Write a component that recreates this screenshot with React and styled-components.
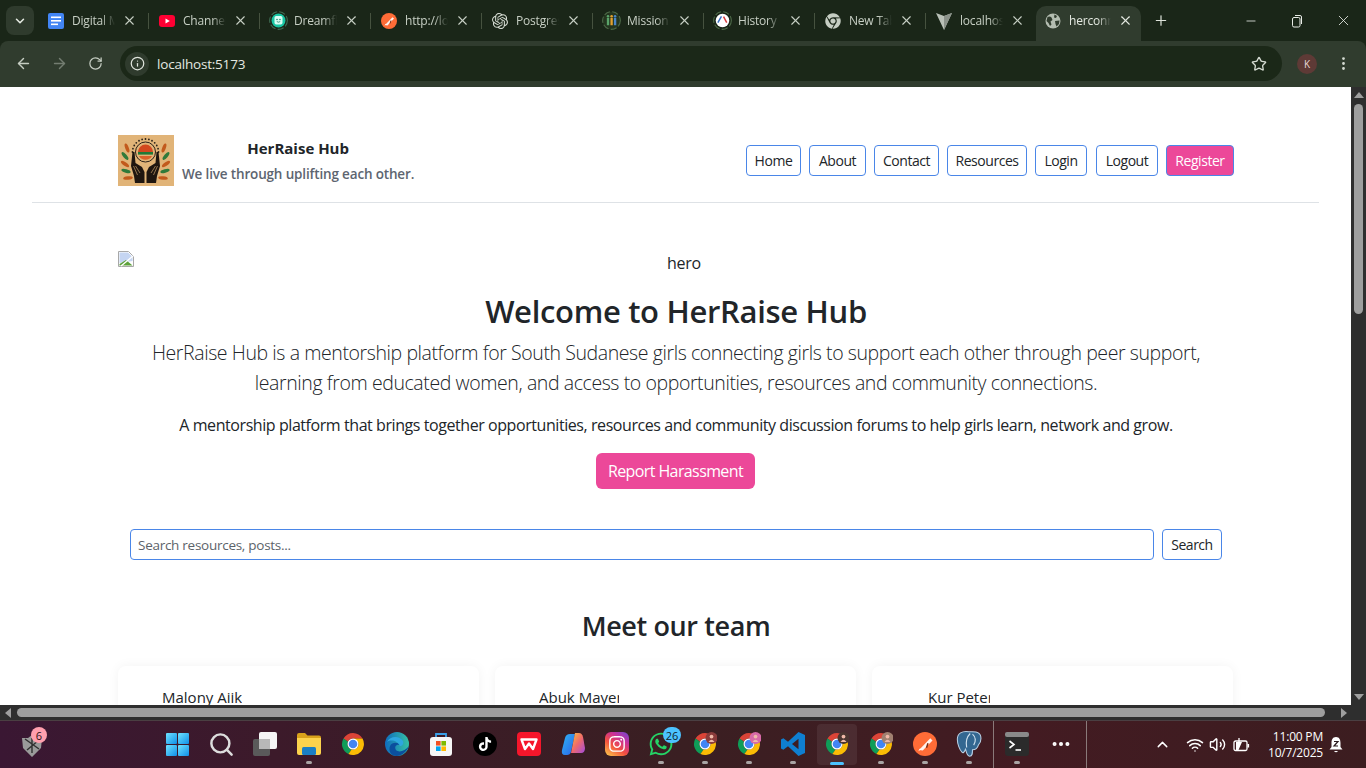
import styled, { createGlobalStyle } from 'styled-components';
import {
    ArrowLeft, ArrowRight, RotateCw, Info, Star, X, Plus, Minus, ChevronDown, ChevronUp,
    EllipsisVertical, Ellipsis, Search, Wifi, Volume2,
} from 'lucide-react';
import { SiOpenai, SiTiktok } from 'react-icons/si';
import { FaWhatsapp, FaInstagram, FaChrome } from 'react-icons/fa';

const GlobalStyle = createGlobalStyle`
html, body {
    margin: 0;
    padding: 0;
    overflow: hidden;
    background: #1a2618;
}
* {
    box-sizing: border-box;
}
`;

const UI_FONT = `"Open Sans", "Noto Sans", sans-serif`;

/* ---------- small drawn icons ---------- */

const DocsIcon = () => (
    <svg width="16" height="16" viewBox="0 0 16 16">
        <rect x="0" y="0" width="16" height="16" rx="2" fill="#4285f4" />
        <rect x="3" y="3.5" width="10" height="1.6" fill="#fff" />
        <rect x="3" y="7" width="10" height="1.6" fill="#fff" />
        <rect x="3" y="10.5" width="7" height="1.6" fill="#fff" />
    </svg>
);

const YoutubeIcon = () => (
    <svg width="16" height="16" viewBox="0 0 16 16">
        <rect x="0" y="2" width="16" height="12" rx="3" fill="#ff0033" />
        <path d="M6.5 5.5 L10.8 8 L6.5 10.5 Z" fill="#fff" />
    </svg>
);

const DreamIcon = () => (
    <svg width="19" height="19" viewBox="0 0 18 18">
        <circle cx="9" cy="9" r="8.4" fill="none" stroke="#3f6b52" strokeWidth="1" strokeDasharray="6 2" />
        <circle cx="9" cy="9" r="6.6" fill="#18c6a3" />
        <rect x="5.2" y="4.8" width="7.6" height="8" rx="1.6" fill="#d8fff4" />
        <circle cx="7.6" cy="8" r=".7" fill="#0f7a64" />
        <circle cx="10.4" cy="8" r=".7" fill="#0f7a64" />
        <path d="M7.4 10 Q9 11.2 10.6 10" stroke="#0f7a64" strokeWidth=".7" fill="none" />
    </svg>
);

const PostmanIcon = ({ size = 16 }) => (
    <svg width={size} height={size} viewBox="0 0 16 16">
        <circle cx="8" cy="8" r="8" fill="#ff6c37" />
        <path d="M4 12 L11.5 4.2 L13 5.6 L6.5 12.4 Z" fill="#fff" opacity=".92" />
        <path d="M3.5 12.8 L5.4 11.6 L4.7 10.8 Z" fill="#fff" />
        <path d="M10 7.5 L9 10.5" stroke="#7a2a10" strokeWidth="1" />
    </svg>
);

const MissionIcon = () => (
    <svg width="19" height="19" viewBox="0 0 18 18">
        <circle cx="9" cy="9" r="8.4" fill="#24351f" stroke="#4d6a48" strokeWidth="1" strokeDasharray="6 2" />
        <rect x="4.6" y="6.5" width="2.2" height="7" fill="#5aa46a" />
        <circle cx="5.7" cy="5" r="1.2" fill="#5aa46a" />
        <rect x="8" y="6.5" width="2.2" height="7" fill="#e0a030" />
        <circle cx="9.1" cy="5" r="1.2" fill="#e0a030" />
        <rect x="11.3" y="6.5" width="2.2" height="7" fill="#4a86c8" />
        <circle cx="12.4" cy="5" r="1.2" fill="#4a86c8" />
    </svg>
);

const HistoryIcon = () => (
    <svg width="19" height="19" viewBox="0 0 18 18">
        <circle cx="9" cy="9" r="8.4" fill="none" stroke="#4d6a48" strokeWidth="1" strokeDasharray="6 2" />
        <circle cx="9" cy="9" r="6.4" fill="#fff" />
        <path d="M4.6 11 L8 5.2" stroke="#3a6fc4" strokeWidth="1.4" />
        <path d="M13 11 L10 5.4" stroke="#d63b3b" strokeWidth="1.4" />
    </svg>
);

const ViteMark = () => (
    <svg width="16" height="18" viewBox="0 0 16 18">
        <path d="M0 1 L8 4 L16 1 L8 18 Z" fill="#b9c0b7" />
        <path d="M8 4 L16 1 L8 18 Z" fill="#8b928a" />
    </svg>
);

const GlobeMark = () => (
    <svg width="16" height="16" viewBox="0 0 16 16">
        <circle cx="8" cy="8" r="7.5" fill="#b4bdb1" />
        <path d="M2.5 4 Q5 3 6.5 4.5 L7.5 7 L5.5 8.5 L6.5 11.5 L5 13 L3.5 10 L1.5 8 Z" fill="#303c2e" />
        <path d="M9.5 1.5 L12 3 L11 5 L9 4.5 Z M10 8 L14.5 7.5 L14 11 L11.5 13.5 L10.5 11 Z" fill="#303c2e" />
    </svg>
);

const BrokenImage = () => (
    <svg width="16" height="16" viewBox="0 0 16 16">
        <path d="M.5 .5 H10.5 L15.5 5.5 V15.5 H.5 Z" fill="#fff" stroke="#a8a8a8" />
        <path d="M1.5 1.5 H10 L14.5 6 V10 L1.5 12 Z" fill="#c5d5f2" />
        <path d="M1.5 14.5 V13 L8 9 L14.5 14.5 Z" fill="#5da13a" />
        <path d="M3 15 L15 5" stroke="#fff" strokeWidth="1.4" />
    </svg>
);

const LEAVES = [
    [9, 13, -20, '#c25a1c'], [7, 21, -40, '#2f7a3a'], [7, 29, -55, '#c25a1c'], [8, 36, -75, '#2f7a3a'], [10, 43, -95, '#c25a1c'],
    [46, 13, 20, '#c25a1c'], [48, 21, 40, '#2f7a3a'], [48, 29, 55, '#c25a1c'], [47, 36, 75, '#2f7a3a'], [45, 43, 95, '#c25a1c'],
];

const BrandMark = () => (
    <svg width="56" height="51" viewBox="0 0 56 51">
        <rect width="56" height="51" fill="#e1b478" />
        {Array.from({ length: 13 }).map((_, i) => {
            const a = Math.PI * (1 + i / 12);
            return <circle key={i} cx={27.5 + 13 * Math.cos(a)} cy={17 + 13 * Math.sin(a)} r=".9" fill="#2a2118" />;
        })}
        <circle cx="27.5" cy="17" r="10" fill="none" stroke="#2a2118" strokeWidth="1" />
        <path d="M20 17 A7.5 7.5 0 0 1 35 17 Z" fill="#d2481e" />
        <rect x="20" y="17" width="15" height="2.6" fill="#1f7a38" />
        <path d="M21 21 H34 A7.5 7.5 0 0 1 21 21 Z" fill="#d9622a" />
        {LEAVES.map(([x, y, r, c], i) => (
            <ellipse key={i} cx={x} cy={y} rx="1.8" ry="4.8" fill={c} transform={`rotate(${r} ${x} ${y})`} />
        ))}
        <path d="M14.5 17 L16.5 17 L17.5 28 L24 32 L26.5 37 V48 H17 L16 41 L13 31 Z" fill="#1f1610" />
        <path d="M40.5 17 L38.5 17 L37.5 28 L31 32 L28.5 37 V48 H38 L39 41 L42 31 Z" fill="#1f1610" />
        <path d="M17.5 31 L22 38 M15.5 31 L19.5 40 M37.5 31 L33 38 M39.5 31 L35.5 40" stroke="#e1b478" strokeWidth=".6" />
    </svg>
);

const ChromeIcon = ({ size = 24, avatar }) => (
    <svg width={size} height={size} viewBox="0 0 24 24">
        <path d="M2.5 6.4 A11 11 0 0 1 21.5 6.5 H12 A5.5 5.5 0 0 0 7 9.8 Z" fill="#db4437" />
        <path d="M2.5 6.4 L7 9.8 A5.5 5.5 0 0 0 10.6 17.4 L7.4 22 A11 11 0 0 1 2.5 6.4 Z" fill="#0f9d58" />
        <path d="M21.5 6.5 A11 11 0 0 1 7.4 22 L10.6 17.4 A5.5 5.5 0 0 0 16.8 9.5 L12 6.5 Z" fill="#fbbc05" />
        <circle cx="12" cy="12" r="5.5" fill="#fff" />
        <circle cx="12" cy="12" r="4.3" fill="#4285f4" />
        {avatar && <circle cx="18.5" cy="6" r="6" fill={avatar} />}
        {avatar && <circle cx="18.5" cy="4.6" r="1.9" fill="#f0b9a8" />}
        {avatar && <path d="M15.5 10 Q18.5 5.5 21.5 10 Z" fill="#f0b9a8" />}
    </svg>
);

const WindowsIcon = () => (
    <svg width="23" height="23" viewBox="0 0 23 23">
        <defs>
            <linearGradient id="winPane" x1="0" y1="0" x2="1" y2="1">
                <stop offset="0" stopColor="#6fe3ff" />
                <stop offset="1" stopColor="#0f8fe8" />
            </linearGradient>
        </defs>
        <rect x="0" y="0" width="11" height="11" rx="1" fill="url(#winPane)" />
        <rect x="12" y="0" width="11" height="11" rx="1" fill="url(#winPane)" />
        <rect x="0" y="12" width="11" height="11" rx="1" fill="url(#winPane)" />
        <rect x="12" y="12" width="11" height="11" rx="1" fill="url(#winPane)" />
    </svg>
);

const TaskViewIcon = () => (
    <svg width="24" height="24" viewBox="0 0 24 24">
        <rect x="0" y="7" width="17" height="17" rx="2" fill="#5a5a5a" />
        <rect x="6" y="0" width="18" height="17" rx="2" fill="#f5f5f5" />
        <rect x="6" y="7" width="11" height="10" fill="#b8b8b8" />
    </svg>
);

const FolderIcon = () => (
    <svg width="24" height="22" viewBox="0 0 24 22">
        <path d="M0 2 Q0 0 2 0 H8 L10.5 2.5 H22 Q24 2.5 24 4.5 V8 H0 Z" fill="#d9a21b" />
        <path d="M0 5 H24 V20 Q24 22 22 22 H2 Q0 22 0 20 Z" fill="#fcd34d" />
        <rect x="5" y="14" width="14" height="8" rx="1.5" fill="#1b7fc4" />
    </svg>
);

const EdgeIcon = () => (
    <svg width="24" height="24" viewBox="0 0 24 24">
        <defs>
            <linearGradient id="edgeGrad" x1="0" y1="0" x2="1" y2="0">
                <stop offset="0" stopColor="#0f6cbd" />
                <stop offset="1" stopColor="#35c1a5" />
            </linearGradient>
        </defs>
        <circle cx="12" cy="12" r="12" fill="url(#edgeGrad)" />
        <path d="M24 14 C22 20 16 24 12 24 C6 24 3 19 5 14 C7 10 13 10 15 13 C11 12 9 15 11 18 C14 21 20 19 24 14 Z" fill="#0b4f9e" />
        <path d="M2 10 C5 4 14 3 18 9 C19 12 17 14 15 14 C13 9 6 7 2 10 Z" fill="#2ea7e0" />
    </svg>
);

const StoreIcon = () => (
    <svg width="24" height="24" viewBox="0 0 24 24">
        <path d="M7 5 V2 H17 V5" fill="none" stroke="#3aa0e8" strokeWidth="1.8" />
        <rect x="1" y="5" width="22" height="19" rx="3" fill="#f6f6f6" />
        <rect x="7" y="9" width="4.6" height="4.6" fill="#f25022" />
        <rect x="12.4" y="9" width="4.6" height="4.6" fill="#7fba00" />
        <rect x="7" y="14.4" width="4.6" height="4.6" fill="#00a4ef" />
        <rect x="12.4" y="14.4" width="4.6" height="4.6" fill="#ffb900" />
    </svg>
);

const WpsIcon = () => (
    <svg width="24" height="24" viewBox="0 0 24 24">
        <rect width="24" height="24" rx="4" fill="#f5162b" />
        <path d="M4.5 7.5 H19.5 L16 17 L12 11.5 L8 17 Z" fill="none" stroke="#fff" strokeWidth="2.4" strokeLinejoin="round" />
    </svg>
);

const CopilotIcon = () => (
    <svg width="24" height="24" viewBox="0 0 24 24">
        <defs>
            <linearGradient id="copA" x1="0" y1="0" x2="1" y2="1">
                <stop offset="0" stopColor="#2fb5f5" />
                <stop offset="1" stopColor="#2a62e8" />
            </linearGradient>
            <linearGradient id="copB" x1="0" y1="0" x2="1" y2="1">
                <stop offset="0" stopColor="#f7c23c" />
                <stop offset=".5" stopColor="#f06a6a" />
                <stop offset="1" stopColor="#a24ae0" />
            </linearGradient>
        </defs>
        <path d="M9 2 H14 L10 20 Q9 23 6 23 H4 Q0 23 1 18 L4 6 Q5 2 9 2 Z" fill="url(#copA)" />
        <path d="M14 1 H18 Q21 1 22 5 L24 16 Q24 21 20 21 H10 Z" fill="url(#copB)" />
    </svg>
);

const InstaTile = styled.div`
width: 24px;
height: 24px;
border-radius: 6px;
background: linear-gradient(35deg, #fdc14a 5%, #f2503f 40%, #c92f9a 70%, #6a4bd6 100%);
display: flex;
align-items: center;
justify-content: center;
color: #fff;
`;

const TikTokTile = styled(InstaTile)`
background: #000;
border-radius: 50%;
`;

const VsCodeIcon = () => (
    <svg width="24" height="24" viewBox="0 0 24 24">
        <path d="M17.5 0 L24 3 V21 L17.5 24 L7 14.2 L2.4 17.8 L0 16.6 V7.4 L2.4 6.2 L7 9.8 Z M17.5 6.8 L11 12 L17.5 17.2 Z" fill="#0f7fd1" fillRule="evenodd" />
    </svg>
);

const ElephantIcon = () => (
    <svg width="28" height="28" viewBox="0 0 24 24">
        <path d="M12 1.5 C6 0.5 2 3 2 8 C2 12 4 17 6 19 C7 20 8 19 9 16.5 C10 19 10 22 12.5 22.5 C15 22.5 15 20 15 17 C18 17 19.5 15 20 13 C23 10 23 4 20 2.5 C18 1 15 1.5 12 1.5 Z" fill="#336791" stroke="#b9d0e4" strokeWidth=".9" />
        <path d="M13 3 C10 6 9 10 10 15 M15 3.5 C18 6 18 10 16 13" fill="none" stroke="#cfe0ee" strokeWidth="1" />
    </svg>
);

const TerminalIcon = () => (
    <svg width="24" height="24" viewBox="0 0 24 24">
        <rect width="24" height="24" rx="3" fill="#2b2b2b" />
        <rect width="24" height="5" rx="2" fill="#8a8a8a" />
        <path d="M4.5 9 L9 12.5 L4.5 16" fill="none" stroke="#fff" strokeWidth="1.6" />
        <path d="M10.5 18 H16" stroke="#fff" strokeWidth="1.6" />
    </svg>
);

const NhlIcon = () => (
    <svg width="20" height="22" viewBox="0 0 20 22">
        <path d="M10 0 L14 3 L20 3 L19 13 L10 22 L1 13 L0 3 L6 3 Z" fill="#9a9a9a" />
        <path d="M3 4 L17 14 M17 5 L5 15 M10 3 V18" stroke="#303030" strokeWidth="1.4" />
    </svg>
);

const BatteryIcon = () => (
    <svg width="17" height="14" viewBox="0 0 17 14">
        <rect x="1" y="3" width="13" height="9.5" rx="1.5" fill="none" stroke="#fff" strokeWidth="1.3" />
        <rect x="14.5" y="6" width="1.6" height="3.5" fill="#fff" />
        <path d="M3 4 H9 L5.5 12 H3 Z" fill="#fff" />
        <path d="M6 0 V4" stroke="#fff" strokeWidth="1.3" />
    </svg>
);

const DndBell = () => (
    <svg width="16" height="18" viewBox="0 0 16 18">
        <path d="M8 1 C4.5 1 3.5 4 3.5 7 V11 L1.5 13.5 H14.5 L12.5 11 V7 C12.5 4 11.5 1 8 1 Z" fill="#fff" />
        <path d="M6 15 Q8 17.5 10 15 Z" fill="#fff" />
        <path d="M6 5.5 H10 L6 10 H10" fill="none" stroke="#2b1a1d" strokeWidth="1.2" />
    </svg>
);

const RestoreGlyph = () => (
    <svg width="12" height="14" viewBox="0 0 12 14">
        <rect x="1.5" y="3.5" width="7.5" height="9.5" rx="1.5" fill="none" stroke="#e8ece6" strokeWidth="1" />
        <path d="M4 1.5 H9 Q10.5 1.5 10.5 3 V10" fill="none" stroke="#e8ece6" strokeWidth="1" />
    </svg>
);

/* ---------- data ---------- */

const TABS = [
    { title: 'Digital Marketing', icon: <DocsIcon /> },
    { title: 'Channel content', icon: <YoutubeIcon /> },
    { title: 'Dreamflow', icon: <DreamIcon /> },
    { title: 'http://localhost', icon: <PostmanIcon /> },
    { title: 'Postgres guide', icon: <SiOpenai size={16} color="#d5dbd2" /> },
    { title: 'Mission statement', icon: <MissionIcon /> },
    { title: 'History', icon: <HistoryIcon /> },
    { title: 'New Tab', icon: <FaChrome size={16} color="#c5cdc2" /> },
    { title: 'localhost', icon: <ViteMark />, last: true },
    { title: 'herconnect', icon: <GlobeMark />, active: true },
];

const NAV = [
    { label: 'Home', w: 55 },
    { label: 'About', w: 57 },
    { label: 'Contact', w: 65 },
    { label: 'Resources', w: 80 },
    { label: 'Login', w: 52 },
    { label: 'Logout', w: 62, extra: 1 },
    { label: 'Register', w: 68, primary: true },
];

const TEAM = [
    { name: 'Malony Aiik', offset: 0, clip: 80 },
    { name: 'Abuk Mayen', offset: 0, clip: 80 },
    { name: 'Kur Peter', offset: 12, clip: 62 },
];

const TASKBAR = [
    { icon: <WindowsIcon /> },
    { icon: <Search size={27} color="#ddd" strokeWidth={2.2} /> },
    { icon: <TaskViewIcon /> },
    { icon: <FolderIcon />, running: true },
    { icon: <ChromeIcon /> },
    { icon: <EdgeIcon /> },
    { icon: <StoreIcon /> },
    { icon: <TikTokTile><SiTiktok size={14} /></TikTokTile> },
    { icon: <WpsIcon /> },
    { icon: <CopilotIcon /> },
    { icon: <InstaTile><FaInstagram size={18} /></InstaTile> },
    { icon: <FaWhatsapp size={26} color="#25d366" />, running: true, badge: '26' },
    { icon: <ChromeIcon avatar="#8a3b3b" />, running: true },
    { icon: <ChromeIcon avatar="#d86aa8" />, running: true },
    { icon: <VsCodeIcon />, running: true },
    { icon: <ChromeIcon avatar="#4a3530" />, active: true },
    { icon: <ChromeIcon avatar="#a08070" />, running: true },
    { icon: <PostmanIcon size={24} />, running: true },
    { icon: <ElephantIcon />, running: true },
];

/* ---------- page ---------- */

export default function App() {
    return (
        <Screen>
            <GlobalStyle />

            <TabStrip>
                <TabSearch><ChevronDown size={14} strokeWidth={2.6} /></TabSearch>
                {TABS.map((tab) => (
                    <Tab key={tab.title} $active={tab.active} $last={tab.last}>
                        <Favicon>{tab.icon}</Favicon>
                        <TabTitle>{tab.title}</TabTitle>
                        <TabClose><X size={15} strokeWidth={1.8} /></TabClose>
                    </Tab>
                ))}
                <NewTab><Plus size={17} strokeWidth={1.8} /></NewTab>
                <WindowControls>
                    <WindowButton><Minus size={14} strokeWidth={1.4} /></WindowButton>
                    <WindowButton><RestoreGlyph /></WindowButton>
                    <WindowButton><X size={17} strokeWidth={1.2} /></WindowButton>
                </WindowControls>
            </TabStrip>

            <Toolbar>
                <ToolButton><ArrowLeft size={17} /></ToolButton>
                <ToolButton $dim><ArrowRight size={17} /></ToolButton>
                <ToolButton><RotateCw size={15} /></ToolButton>
                <Omnibox>
                    <InfoChip><Info size={15} /></InfoChip>
                    <Url>localhost:5173</Url>
                    <Star size={16} color="#d5dbd2" />
                </Omnibox>
                <ProfileBadge>K</ProfileBadge>
                <MenuButton><EllipsisVertical size={17} /></MenuButton>
            </Toolbar>

            <ViewportRow>
                <Page>
                    <Header>
                        <HeaderInner>
                            <Brand>
                                <BrandMark />
                                <BrandText>
                                    <BrandName>HerRaise Hub</BrandName>
                                    <BrandTagline>We live through uplifting each other.</BrandTagline>
                                </BrandText>
                            </Brand>
                            <Nav>
                                {NAV.map((item) => (
                                    <NavButton key={item.label} $w={item.w} $primary={item.primary} $extra={item.extra}>
                                        {item.label}
                                    </NavButton>
                                ))}
                            </Nav>
                        </HeaderInner>
                    </Header>

                    <Main>
                        <HeroImage>
                            <BrokenImage />
                            <HeroAlt>hero</HeroAlt>
                        </HeroImage>
                        <Title>Welcome to HerRaise Hub</Title>
                        <Lead>
                            HerRaise Hub is a mentorship platform for South Sudanese girls connecting girls to support each other through peer support,
                            <br />
                            learning from educated women, and access to opportunities, resources and community connections.
                        </Lead>
                        <Intro>A mentorship platform that brings together opportunities, resources and community discussion forums to help girls learn, network and grow.</Intro>
                        <ReportButton>Report Harassment</ReportButton>

                        <SearchRow>
                            <SearchInput placeholder="Search resources, posts..." />
                            <SearchButton>Search</SearchButton>
                        </SearchRow>

                        <TeamTitle>Meet our team</TeamTitle>
                        <TeamGrid>
                            {TEAM.map((person) => (
                                <TeamCard key={person.name}>
                                    <Avatar $offset={person.offset} $clip={person.clip}>{person.name}</Avatar>
                                </TeamCard>
                            ))}
                        </TeamGrid>
                    </Main>
                </Page>

                <VScroll>
                    <ArrowUp />
                    <VThumb />
                    <ArrowDown />
                </VScroll>
            </ViewportRow>

            <HScroll>
                <ArrowLeftTri />
                <HThumb />
                <ArrowRightTri />
            </HScroll>

            <Taskbar>
                <Widget>
                    <NhlIcon />
                    <WidgetBadge>6</WidgetBadge>
                </Widget>
                {TASKBAR.map((item, i) => (
                    <TaskSlot key={i} $active={item.active}>
                        {item.icon}
                        {item.badge && <TaskBadge>{item.badge}</TaskBadge>}
                        {item.running && <RunDot />}
                        {item.active && <ActiveBar />}
                    </TaskSlot>
                ))}
                <TaskDivider $left={2} $right={1} />
                <TaskSlot>
                    <TerminalIcon />
                    <RunDot />
                </TaskSlot>
                <TaskSlot><Ellipsis size={22} color="#fff" strokeWidth={2.4} /></TaskSlot>
                <TaskDivider $left={3} $right={0} />
                <Tray>
                    <TrayItem $w={24}><ChevronUp size={17} color="#fff" /></TrayItem>
                    <TrayItem $w={23} $gap={9}><Wifi size={18} color="#fff" /></TrayItem>
                    <TrayItem $w={23}><Volume2 size={17} color="#fff" /></TrayItem>
                    <TrayItem $w={25}><BatteryIcon /></TrayItem>
                    <Clock>
                        <span>11:00 PM</span>
                        <span>10/7/2025</span>
                    </Clock>
                    <TrayItem $w={26}><DndBell /></TrayItem>
                </Tray>
            </Taskbar>
        </Screen>
    );
}

const Screen = styled.div`
width: 1366px;
height: 768px;
display: flex;
flex-direction: column;
overflow: hidden;
font-family: ${UI_FONT};
`;

/* browser frame */

const TabStrip = styled.div`
height: 41px;
flex: none;
display: flex;
align-items: stretch;
background: #1a2618;
padding: 6px 0 0 6px;
color: #c7cfc4;
`;

const TabSearch = styled.div`
width: 28px;
height: 29px;
margin-right: 3px;
border-radius: 8px;
background: #2f3b2d;
display: flex;
align-items: center;
justify-content: center;
color: #e6ebe3;
`;

const Tab = styled.div`
position: relative;
flex: none;
width: ${(p) => (p.$active ? '105px' : '111px')};
display: flex;
align-items: center;
padding: 0 ${(p) => (p.$active ? '8px' : '11px')} 6px ${(p) => (p.$active ? '9px' : '11px')};
font-size: 12px;
color: ${(p) => (p.$active ? '#e4e9e1' : '#c7cfc4')};
background: ${(p) => (p.$active ? '#303c2e' : 'transparent')};
border-radius: ${(p) => (p.$active ? '10px 10px 0 0' : '0')};

&::after {
    content: '';
    display: ${(p) => (p.$active || p.$last ? 'none' : 'block')};
    position: absolute;
    right: -1px;
    top: 7px;
    width: 1px;
    height: 16px;
    background: #46523f;
}
`;

const Favicon = styled.div`
width: 16px;
height: 19px;
margin-right: 8px;
flex: none;
display: flex;
align-items: center;
justify-content: center;
& > svg {
    flex: none;
}
`;

const TabTitle = styled.div`
flex: 1;
min-width: 0;
overflow: hidden;
white-space: nowrap;
letter-spacing: -0.2px;
margin-right: 6px;
-webkit-mask-image: linear-gradient(to right, #000 68%, transparent 100%);
mask-image: linear-gradient(to right, #000 68%, transparent 100%);
`;

const TabClose = styled.div`
width: 16px;
flex: none;
display: flex;
align-items: center;
justify-content: center;
`;

const NewTab = styled.div`
width: 16px;
margin-left: 12px;
padding-bottom: 6px;
display: flex;
align-items: center;
justify-content: center;
color: #dfe4dc;
`;

const WindowControls = styled.div`
margin-left: auto;
margin-top: -6px;
display: flex;
`;

const WindowButton = styled.div`
width: 46px;
display: flex;
align-items: center;
justify-content: center;
color: #e8ece6;
`;

const Toolbar = styled.div`
height: 46px;
flex: none;
display: flex;
align-items: center;
padding: 0 0 1px 5px;
background: #303c2e;
border-radius: 8px 8px 0 0;
color: #c5cdc2;
`;

const ToolButton = styled.div`
width: 36px;
display: flex;
justify-content: center;
opacity: ${(p) => (p.$dim ? 0.45 : 1)};
`;

const Omnibox = styled.div`
width: 1162px;
height: 35px;
margin-left: 7px;
padding: 0 15px 0 5px;
display: flex;
align-items: center;
border-radius: 18px;
background: #1b2818;
`;

const InfoChip = styled.div`
width: 24px;
height: 24px;
border-radius: 50%;
background: #2f3b2d;
display: flex;
align-items: center;
justify-content: center;
color: #dfe4dc;
`;

const Url = styled.div`
flex: 1;
margin-left: 8px;
font-size: 13.5px;
letter-spacing: -0.2px;
color: #e4e8e1;
`;

const ProfileBadge = styled.div`
width: 20px;
height: 20px;
margin-left: 15px;
border-radius: 50%;
background: #5e3a36;
color: #e8d8d4;
font-size: 10px;
display: flex;
align-items: center;
justify-content: center;
`;

const MenuButton = styled.div`
margin-left: 18px;
display: flex;
color: #d5dbd2;
`;

const ViewportRow = styled.div`
height: 618px;
flex: none;
display: flex;
`;

const Page = styled.div`
flex: 1;
min-width: 0;
overflow: hidden;
background: #fff;
color: #212529;
`;

const Header = styled.header`
margin: 0 32px;
padding: 48px 85px 16px 86px;
border-bottom: 1px solid #dee2e6;
`;

const HeaderInner = styled.div`
display: flex;
align-items: center;
justify-content: space-between;
`;

const Brand = styled.div`
display: flex;
align-items: center;
gap: 8px;
`;

const BrandText = styled.div`
display: flex;
flex-direction: column;
align-items: center;
gap: 6px;
`;

const BrandName = styled.div`
font-size: 15px;
line-height: 20px;
font-weight: 700;
color: #212529;
`;

const BrandTagline = styled.div`
font-size: 13.5px;
line-height: 20px;
font-weight: 600;
letter-spacing: -0.16px;
color: #5d6570;
`;

const Nav = styled.nav`
display: flex;
gap: 8px;
`;

const NavButton = styled.div`
width: ${(p) => p.$w}px;
height: 31px;
margin-left: ${(p) => p.$extra || 0}px;
border: 1px solid #4a86e8;
border-radius: 4px;
display: flex;
align-items: center;
justify-content: center;
font-size: 14px;
letter-spacing: -0.45px;
color: ${(p) => (p.$primary ? '#fff' : '#212529')};
background: ${(p) => (p.$primary ? '#ec4899' : '#fff')};
`;

const Main = styled.main`
padding: 48px 117px 0 118px;
display: flex;
flex-direction: column;
align-items: center;
`;

const HeroImage = styled.div`
width: 100%;
height: 24px;
display: flex;
font-size: 16px;
line-height: 24px;
letter-spacing: -0.3px;
`;

const HeroAlt = styled.div`
flex: 1;
text-align: center;
`;

const Title = styled.h1`
margin: 16px 0 0;
font-size: 31px;
line-height: 40px;
font-weight: 600;
letter-spacing: -0.32px;
color: #212529;
`;

const Lead = styled.p`
margin: 7px 0 0;
font-size: 19.5px;
line-height: 30px;
font-weight: 300;
letter-spacing: -0.41px;
text-align: center;
white-space: nowrap;
color: #212529;
`;

const Intro = styled.p`
margin: 15px 0 0;
font-size: 16px;
line-height: 24px;
letter-spacing: -0.43px;
text-align: center;
white-space: nowrap;
color: #212529;
`;

const ReportButton = styled.div`
margin: 16px 1px 0 0;
width: 159px;
height: 36px;
border-radius: 6px;
background: #ec4899;
color: #fff;
font-size: 16px;
letter-spacing: -0.6px;
display: flex;
align-items: center;
justify-content: center;
`;

const SearchRow = styled.div`
width: 100%;
margin-top: 40px;
padding: 0 12px;
display: flex;
gap: 8px;
`;

const SearchInput = styled.input`
flex: 1;
height: 31px;
padding: 0 7px;
border: 1px solid #4a86e8;
border-radius: 4px;
outline: none;
font-family: ${UI_FONT};
font-size: 13.5px;
letter-spacing: -0.27px;
color: #212529;
&::placeholder {
    color: #5c636a;
    opacity: 1;
}
`;

const SearchButton = styled.div`
width: 60px;
height: 31px;
border: 1px solid #4a86e8;
border-radius: 4px;
display: flex;
align-items: center;
justify-content: center;
font-size: 14px;
letter-spacing: -0.5px;
`;

const TeamTitle = styled.h2`
margin: 48px 0 0;
font-size: 27px;
line-height: 36px;
font-weight: 600;
letter-spacing: -0.38px;
color: #212529;
`;

const TeamGrid = styled.div`
width: 100%;
margin-top: 22px;
display: grid;
grid-template-columns: repeat(3, 361px);
gap: 16px;
`;

const TeamCard = styled.div`
height: 200px;
padding: 21px 44px;
border-radius: 8px;
background: #fff;
box-shadow: 0 0 12px rgba(0, 0, 0, 0.05);
`;

const Avatar = styled.div`
width: ${(p) => p.$clip}px;
margin-left: ${(p) => p.$offset}px;
overflow: hidden;
white-space: nowrap;
font-size: 15px;
line-height: 20px;
color: #212529;
`;

/* scrollbars */

const VScroll = styled.div`
width: 15px;
flex: none;
background: #2e2e2e;
display: flex;
flex-direction: column;
align-items: center;
padding: 5px 0;
`;

const VThumb = styled.div`
width: 9px;
height: 210px;
margin-top: 6px;
margin-bottom: auto;
border-radius: 5px;
background: #9e9e9e;
`;

const ArrowUp = styled.div`
width: 0;
height: 0;
border-left: 5px solid transparent;
border-right: 5px solid transparent;
border-bottom: 6px solid #9e9e9e;
`;

const ArrowDown = styled.div`
width: 0;
height: 0;
border-left: 5px solid transparent;
border-right: 5px solid transparent;
border-top: 6px solid #9e9e9e;
`;

const HScroll = styled.div`
height: 15px;
flex: none;
background: #2e2e2e;
display: flex;
align-items: center;
padding: 0 19px 0 5px;
`;

const HThumb = styled.div`
width: 1308px;
height: 9px;
margin-left: 6px;
margin-right: auto;
border-radius: 5px;
background: #9e9e9e;
`;

const ArrowLeftTri = styled.div`
width: 0;
height: 0;
border-top: 5px solid transparent;
border-bottom: 5px solid transparent;
border-right: 6px solid #9e9e9e;
`;

const ArrowRightTri = styled.div`
width: 0;
height: 0;
border-top: 5px solid transparent;
border-bottom: 5px solid transparent;
border-left: 6px solid #9e9e9e;
`;

/* taskbar */

const Taskbar = styled.div`
height: 48px;
flex: none;
display: flex;
align-items: stretch;
border-top: 1px solid #4a3f42;
background: linear-gradient(90deg, #3a1733 0%, #3c1a2a 20%, #3a1f22 50%, #431b22 75%, #3c1d20 100%);
`;

const Widget = styled.div`
position: relative;
width: 155px;
flex: none;
padding: 3px 0 0 22px;
display: flex;
align-items: center;
`;

const WidgetBadge = styled.div`
position: absolute;
left: 31px;
top: 6px;
width: 16px;
height: 16px;
border-radius: 50%;
background: #ff9fae;
color: #2a1215;
font-size: 11px;
display: flex;
align-items: center;
justify-content: center;
`;

const TaskSlot = styled.div`
position: relative;
width: 44px;
flex: none;
display: flex;
align-items: center;
justify-content: center;
padding-bottom: 1px;

&::before {
    content: '';
    display: ${(p) => (p.$active ? 'block' : 'none')};
    position: absolute;
    left: 2px;
    right: 2px;
    top: 3px;
    bottom: 3px;
    border-radius: 4px;
    background: rgba(255, 255, 255, 0.07);
}
& > svg, & > div {
    position: relative;
}
`;

const TaskBadge = styled.div`
position: absolute !important;
left: 24px;
top: 6px;
width: 18px;
height: 16px;
border-radius: 8px;
background: #4cc2ff;
color: #10222c;
font-size: 11px;
display: flex;
align-items: center;
justify-content: center;
`;

const RunDot = styled.div`
position: absolute !important;
left: 19px;
bottom: 4px;
width: 6px;
height: 3px;
border-radius: 2px;
background: #a9a4a4;
`;

const ActiveBar = styled.div`
position: absolute !important;
left: 15px;
bottom: 3px;
width: 14px;
height: 3px;
border-radius: 2px;
background: #4cc2ff;
`;

const TaskDivider = styled.div`
width: 1px;
flex: none;
margin: 0 ${(p) => p.$right}px 0 ${(p) => p.$left}px;
background: #8a7a7a;
`;

const Tray = styled.div`
display: flex;
align-items: stretch;
margin-left: 63px;
`;

const TrayItem = styled.div`
width: ${(p) => p.$w}px;
margin-left: ${(p) => p.$gap || 0}px;
flex: none;
display: flex;
align-items: center;
justify-content: center;
`;

const Clock = styled.div`
width: 69px;
display: flex;
flex-direction: column;
align-items: flex-end;
justify-content: center;
font-size: 12px;
line-height: 16px;
letter-spacing: -0.2px;
color: #fff;
`;
